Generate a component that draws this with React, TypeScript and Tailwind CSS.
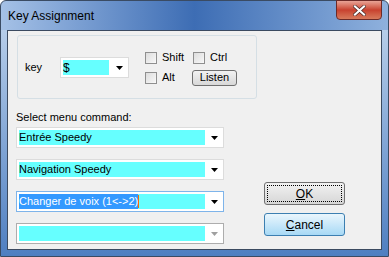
import React from "react";

const font = { fontFamily: '"Liberation Sans", Arial, sans-serif' };

const Arrow = ({ disabled }: { disabled?: boolean }) => (
  <svg width="7" height="4" viewBox="0 0 7 4" className="shrink-0">
    <path d="M0 0h7L3.5 4z" fill={disabled ? "#a0a0a0" : "#000"} />
  </svg>
);

const Combo = ({
  children,
  focused,
  disabled,
}: {
  children?: React.ReactNode;
  focused?: boolean;
  disabled?: boolean;
}) => (
  <div
    className={`flex h-[21px] w-[208px] items-center border bg-white pl-[2px] pr-[4px] ${
      focused ? "border-[#7eb4ea]" : disabled ? "border-[#adadad]" : "border-[#dcdcdc]"
    }`}
  >
    <div className="flex h-[15px] w-[186px] items-center bg-[#66ffff] text-[11px] leading-none text-black">
      {children}
    </div>
    <div className="flex flex-1 justify-end pr-[1px]">
      <Arrow disabled={disabled} />
    </div>
  </div>
);

const Check = ({ label }: { label: string }) => (
  <div className="flex items-center gap-[5px]">
    <div className="h-[12px] w-[12px] border border-[#8f8f8f] bg-gradient-to-br from-[#dcdcdc] to-[#fafafa] p-[1px]">
      <div className="h-full w-full bg-gradient-to-br from-[#e0e0e0] to-[#f4f4f4]" />
    </div>
    <span className="text-[11px] leading-none">{label}</span>
  </div>
);

export default function App() {
  return (
    <div style={font} className="relative h-[257px] w-[389px] overflow-hidden bg-white">
      <div className="flex h-[257px] w-[389px] flex-col rounded-t-[6px] border border-[#3a4b63] bg-gradient-to-r from-[#a5c1e6] via-[#3d6db4] to-[#8fb1dd]">
        {/* title bar */}
        <div className="relative flex h-[29px] items-center pl-[7px]">
          <span className="text-[12px] leading-none text-black">Key Assignment</span>
          <div className="absolute right-[6px] top-[-1px] flex h-[20px] w-[46px] items-center justify-center rounded-b-[4px] border border-[#6c2a27] bg-gradient-to-b from-[#e8a396] via-[#c8412f] to-[#d77a5c]">
            <svg width="13" height="11" viewBox="0 0 13 11">
              <path d="M2 1.5l9 8M11 1.5l-9 8" stroke="#3b2220" strokeWidth="3.4" strokeLinecap="square" />
              <path d="M2 1.5l9 8M11 1.5l-9 8" stroke="#fff" strokeWidth="2.2" strokeLinecap="square" />
            </svg>
          </div>
        </div>
        {/* body frame */}
        <div className="flex flex-1 px-[6px] pb-[6px] bg-gradient-to-b from-[#b6cde9] to-[#4f7fc1]">
          <div className="flex flex-1 flex-col border border-[#3b4a60] bg-[#f0f0f0] pl-[8px] pt-[4px] text-black">
            {/* group box */}
            <div className="ml-[1px] flex h-[64px] w-[240px] items-center rounded-[3px] border border-[#d5dfe5] pl-[7px] pt-[1px]">
              <span className="w-[35px] text-[11px] leading-none">key</span>
              <div className="flex h-[21px] w-[69px] items-center border border-[#dcdcdc] bg-white pl-[2px] pr-[5px]">
                <div className="flex h-[15px] w-[46px] items-center bg-[#66ffff] text-[12px] leading-none">$</div>
                <div className="flex flex-1 justify-end">
                  <Arrow />
                </div>
              </div>
              <div className="ml-[16px] flex flex-col gap-[6px] pt-[2px]">
                <div className="flex gap-[7px]">
                  <div className="w-[41px]">
                    <Check label="Shift" />
                  </div>
                  <Check label="Ctrl" />
                </div>
                <div className="flex items-center gap-[7px]">
                  <div className="w-[40px]">
                    <Check label="Alt" />
                  </div>
                  <div className="flex h-[16px] w-[45px] items-center justify-center rounded-[3px] border border-[#707070] bg-gradient-to-b from-[#f2f2f2] to-[#d8d8d8] text-[11px] leading-none">
                    Listen
                  </div>
                </div>
              </div>
            </div>
            {/* commands */}
            <div className="mt-[13px] flex">
              <div className="flex flex-col">
                <span className="text-[11px] leading-none">Select menu command:</span>
                <div className="mt-[4px] flex flex-col gap-[11px]">
                  <Combo>Entrée Speedy</Combo>
                  <Combo>Navigation Speedy</Combo>
                  <Combo focused>
                    <span className="flex h-full items-center bg-[#3399ff] text-white">Changer de voix (1&lt;-&gt;2)</span>
                    <span className="h-[13px] w-[1px] bg-[#ff6a00]" />
                  </Combo>
                  <Combo disabled />
                </div>
              </div>
              <div className="ml-[40px] mt-[70px] flex flex-col gap-[8px]">
                <div className="flex h-[23px] w-[81px] items-center justify-center rounded-[3px] border border-[#707070] bg-gradient-to-b from-[#f2f2f2] to-[#d6d6d6] p-[2px]">
                  <div className="flex h-full w-full items-center justify-center border border-dotted border-black text-[12px] leading-none">
                    <span className="underline">O</span>K
                  </div>
                </div>
                <div className="flex h-[23px] w-[81px] items-center justify-center rounded-[3px] border border-[#3c7fb1] bg-gradient-to-b from-[#eaf6fd] to-[#a7d9f5] text-[12px] leading-none">
                  <span>
                    <span className="underline">C</span>ancel
                  </span>
                </div>
              </div>
            </div>
          </div>
        </div>
      </div>
    </div>
  );
}
